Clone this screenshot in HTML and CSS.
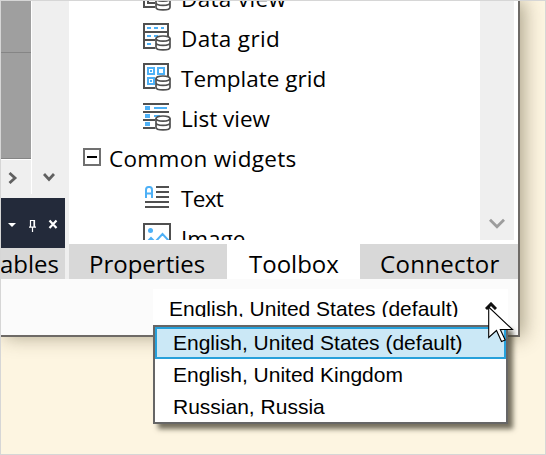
FILE: index.html
```html
<!DOCTYPE html>
<html lang="en">
<head>
<meta charset="utf-8">
<title>Toolbox</title>
<link rel="stylesheet" href="styles.css">
</head>
<body>
<svg class="defs" width="0" height="0">
  <symbol id="db" viewBox="0 0 16 16">
    <path d="M0 3.5V12.5C0 16.5 16 16.5 16 12.5V3.5C16-.5 0-.5 0 3.5Z" fill="#fff"/>
    <g fill="none" stroke="#505050" stroke-width="1.7"><ellipse cx="8" cy="3.6" rx="7" ry="2.6"/><path d="M1 3.6V12.2C1 15.8 15 15.8 15 12.2V3.6M1 7.8C1 11.3 15 11.3 15 7.8"/></g>
  </symbol>
</svg>
<div class="window">
  <div class="workspace">
    <div class="side">
      <div class="canvas"><div class="strip"></div></div>
      <div class="scroll-v">
        <svg width="12" height="9"><path d="M1 1L6 6.4L11 1" fill="none" stroke="#606060" stroke-width="2.8"/></svg>
      </div>
      <div class="scroll-h">
        <svg width="10" height="12"><path d="M1.5 1L7 6L1.5 11" fill="none" stroke="#606060" stroke-width="2.8"/></svg>
      </div>
      <div class="panel-bar">
        <svg width="64" height="50">
          <path d="M7 25H15L11 29Z" fill="#fff"/>
          <path d="M29.5 22.5H33.5V29H29.5ZM28 29.2H35M31.5 29V34M33 23V29" fill="none" stroke="#fff" stroke-width="1.2"/>
          <path d="M48.5 22.5L55.5 30M55.5 22.5L48.5 30" stroke="#fff" stroke-width="2.2"/>
        </svg>
      </div>
      <div class="side-tab"><span>ables</span></div>
    </div>
    <div class="toolbox">
      <div class="body">
        <div class="list">
          <div class="row"><svg class="icon" width="28" height="28"><path d="M1 1H25V24H1ZM5 5H20V20H5Z" fill="none" stroke="#505050" stroke-width="2"/><use href="#db" x="12" y="12" width="16" height="16"/></svg><span class="loose">Data view</span></div>
          <div class="row"><svg class="icon" width="28" height="28"><path d="M1 1H25V25H1ZM1 9H25M1 17H25" fill="none" stroke="#505050" stroke-width="2"/><path d="M4 5H21M4 13H15M4 21H9" stroke="#4db0f6" stroke-width="2" stroke-dasharray="4 3"/><use href="#db" x="12" y="12" width="16" height="16"/></svg><span class="loose">Data grid</span></div>
          <div class="row"><svg class="icon" width="28" height="28"><path d="M1 1H25V25H1Z" fill="none" stroke="#505050" stroke-width="2"/><path d="M5 5H11V11H5ZM15 5H21V11H15ZM5 15H11V21H5Z" fill="none" stroke="#4db0f6" stroke-width="2"/><path d="M7 7H9V9H7ZM7 17H9V19H7Z" fill="#4db0f6"/><use href="#db" x="12" y="12" width="16" height="16"/></svg><span>Template grid</span></div>
          <div class="row"><svg class="icon" width="28" height="28"><path d="M0 1H26M0 9H26M0 17H14M0 25H15" stroke="#505050" stroke-width="2"/><path d="M2 3H7V7H2ZM2 11H7V15H2ZM2 19H7V23H2ZM11 4H24V6H11ZM11 12H17V14H11Z" fill="#4db0f6"/><use href="#db" x="12" y="12" width="16" height="16"/></svg><span>List view</span></div>
          <div class="row group"><svg class="toggle" width="18" height="18"><path d="M1 1H17V17H1Z" fill="#fff" stroke="#707070" stroke-width="2"/><path d="M4 9H14" stroke="#000" stroke-width="2"/></svg><span class="loose">Common widgets</span></div>
          <div class="row"><svg class="icon" width="28" height="28"><path d="M3 15V7Q3 4 5.5 4H6.5Q9 4 9 7V15M3 10.5H9" fill="none" stroke="#4db0f6" stroke-width="2"/><path d="M13 4H26M13 9H26M13 14H26M2 19H26M2 24H26" stroke="#505050" stroke-width="2"/></svg><span class="tight">Text</span></div>
          <div class="row"><svg class="icon" width="28" height="28"><path d="M1 1H27V26H1Z" fill="none" stroke="#505050" stroke-width="2"/><circle cx="7.5" cy="7.5" r="2.5" fill="#4db0f6"/><path d="M3 20L8 15L13 20M13 18L19.5 11L26 18" fill="none" stroke="#4db0f6" stroke-width="2"/></svg><span>Image</span></div>
        </div>
        <div class="scrollbar"><svg width="16" height="12"><path d="M1 1.8L8 8.8L15 1.8" fill="none" stroke="#9c9c9c" stroke-width="2.8"/></svg></div>
      </div>
      <div class="tabs">
        <div class="tab"><span>Properties</span></div>
        <div class="tab active"><span>Toolbox</span></div>
        <div class="tab"><span class="loose">Connector</span></div>
      </div>
    </div>
  </div>
  <div class="status">
    <div class="combo"><div class="value">English, United States (default)</div>
      <svg class="caret" width="12" height="8"><path d="M1 7L6 2L11 7" fill="none" stroke="#111" stroke-width="3"/></svg></div>
  </div>
</div>
<div class="popup">
  <div class="option selected">English, United States (default)</div>
  <div class="option">English, United Kingdom</div>
  <div class="option">Russian, Russia</div>
</div>
<svg class="cursor" width="26" height="38"><path d="M.7 1V31.5L8.5 24.5L13.5 35.5L17.2 34L12.3 23.5H24.5Z" fill="#fff" stroke="#000" stroke-width="1.1"/></svg>
</body>
</html>
```
FILE: styles.css
```css
* { box-sizing: border-box; }
body {
  margin: 0;
  width: 546px;
  height: 455px;
  overflow: hidden;
  position: relative;
  background: #fdf5e1;
  border: 1px solid #d6d6d6;
  color: #000;
  font-family: "Open Sans", "Noto Sans", sans-serif;
  font-size: 24px;
}
svg { display: block; flex: none; }
.defs { position: absolute; }
span { white-space: nowrap; }
.window {
  width: 519px;
  height: 336px;
  background: #fbfbfb;
  border: solid #6e6a66;
  border-width: 0 2px 2px 0;
  box-shadow: 4px 0 18px rgba(60, 50, 20, .42);
}
.workspace { display: flex; height: 278px; }
.side {
  width: 68px;
  display: grid;
  grid-template: 159px 38px 50px 31px / 31px 37px;
  background: #efefef;
}
.canvas { background: #9f9f9f; border-right: 1px solid #fff; border-bottom: 1px solid #fff; }
.strip { height: 158px; border-bottom: 1px solid #858585; background: linear-gradient(#858585, #858585) 0 51px / 100% 1px no-repeat; }
.scroll-v { grid-row: 1 / 3; grid-column: 2; padding: 172px 0 0 11px; }
.scroll-h { grid-row: 2; grid-column: 1; padding: 12px 0 0 7px; border-right: 1px solid #fff; height: 34px; }
.panel-bar { grid-column: 1 / 3; width: 64px; background: #232a3a; }
.side-tab { grid-column: 1 / 3; width: 64px; background: #d8d8d8; line-height: 33px; overflow: hidden; }
.side-tab span { display: block; margin: -1px 0 0 -1px; }
.toolbox { flex: 1; background: #fff; }
.body { display: flex; height: 239px; padding-right: 4px; overflow: hidden; }
.list { flex: 1; margin-top: -22px; font-size: 22.5px; }
.row { height: 40px; display: flex; align-items: flex-start; padding: 4px 0 0 74px; line-height: 32px; }
.row span { margin-left: 10px; }
.group { padding-left: 14px; }
.row.group span { margin-left: 8px; }
.loose { letter-spacing: .33px; }
.tight { letter-spacing: -.7px; }
.toggle { margin-top: 5px; }
.scrollbar { width: 34px; background: #efefef; padding: 217px 0 0 9px; }
.tabs { display: flex; height: 35px; margin-top: 4px; }
.tab { width: 158px; background: #d8d8d8; line-height: 39px; padding-left: 20px; }
.tab.active { width: 133px; background: #fff; padding-left: 22px; }
.status { padding: 10px 0 0 152px; }
.combo { display: flex; width: 355px; height: 36px; padding-left: 16px; background: #fff; }
.value { width: 316px; height: 28px; overflow: hidden; line-height: 39px; white-space: nowrap; }
.value, .option { font-family: "Liberation Sans", sans-serif; font-size: 21px; }
.caret { margin-top: 13px; }
.popup {
  position: absolute;
  left: 152px;
  top: 324px;
  width: 355px;
  height: 99px;
  border: 2px solid #666;
  background: #fff;
  box-shadow: 5px 5px 5px rgba(70, 65, 50, .75);
}
.option { height: 32px; line-height: 32px; padding-left: 18px; }
.selected { border: 2px solid #26a0da; background: #cbe8f6; line-height: 28px; padding-left: 16px; }
.cursor { position: absolute; left: 487px; top: 305px; }
```
